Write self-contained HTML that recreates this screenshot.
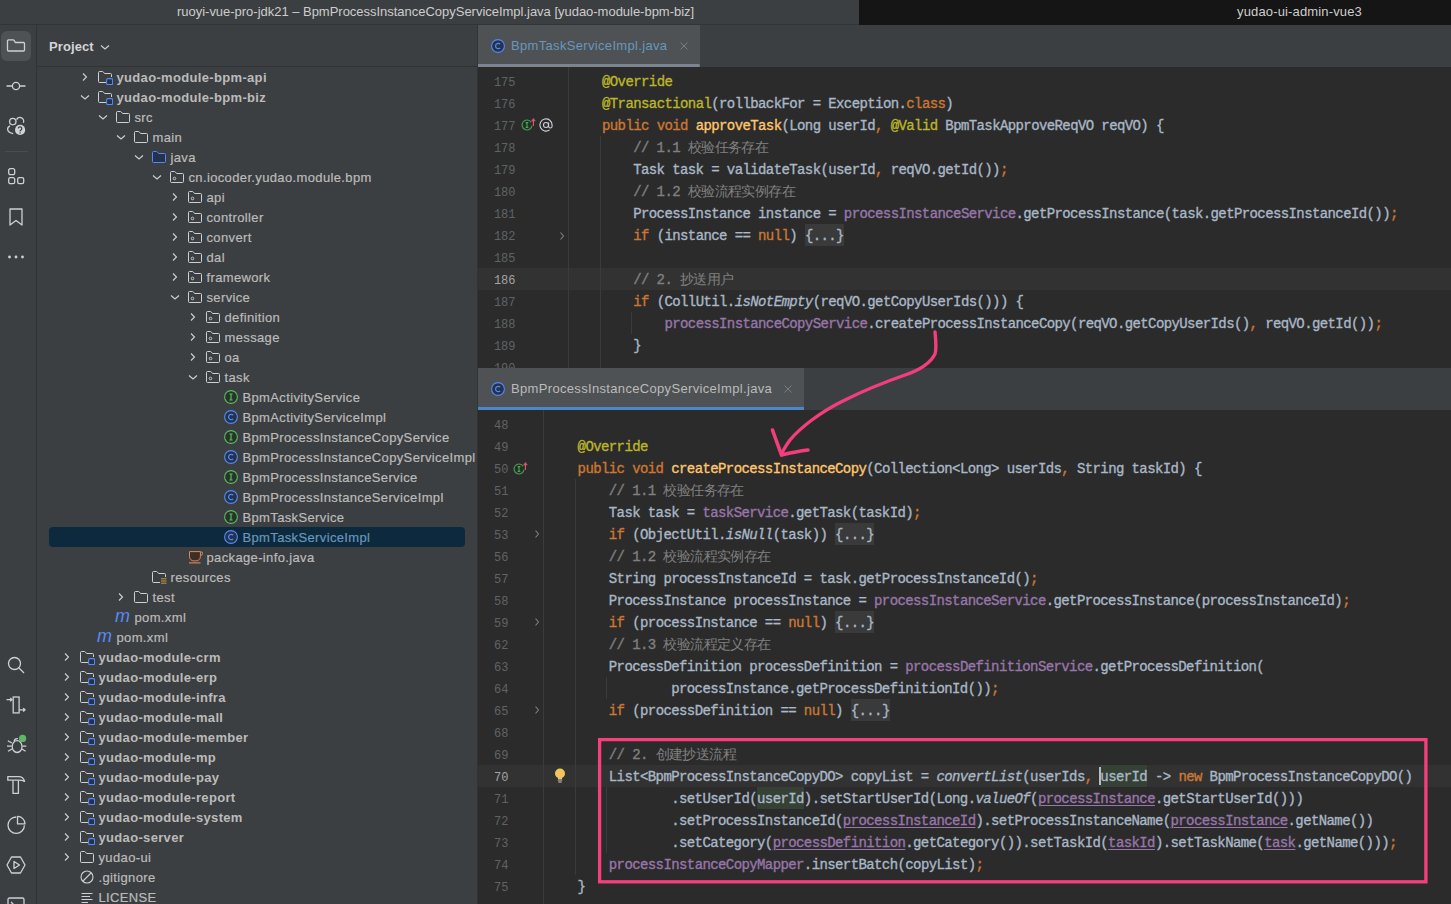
<!DOCTYPE html>
<html><head><meta charset="utf-8"><title>IDE</title><style>
*{margin:0;padding:0;box-sizing:border-box}
html,body{width:1451px;height:904px;overflow:hidden;background:#2b2b2b}
body{position:relative;font-family:"Liberation Sans",sans-serif}
.abs{position:absolute}
.tl{position:absolute;height:20px;line-height:20px;font-size:13px;white-space:pre;color:#bbbbbb;padding-top:1px}
.ln{position:absolute;width:40px;height:22px;line-height:22px;text-align:right;font:12px/22px "Liberation Mono",monospace;white-space:pre;padding-top:1.5px}
.cl{position:absolute;height:22px;font:14px/22px "Liberation Mono",monospace;letter-spacing:-0.6px;white-space:pre;color:#a9b7c6;-webkit-text-stroke:0.35px currentColor}
.cjk{-webkit-text-stroke:0;font-size:13.6px}
.k{color:#cc7832}.a{color:#bbb529}.m{color:#ffc66d}.f{color:#9876aa}.c{color:#808080}.i{font-style:italic}
.u{color:#9876aa;text-decoration:underline;text-decoration-color:#9876aa;text-underline-offset:2px;text-decoration-thickness:1.2px}
.hl{background:#344134}
.fold{color:#a9b7c6}
.guide{position:absolute;width:1px;background:#393b3d}
</style></head>
<body>
<div class="abs" style="left:0;top:0;width:859px;height:25px;background:#3c3f41;border-bottom:1px solid #323436"></div>
<div class="abs" style="left:177px;top:0;height:25px;line-height:24px;font-size:13px;color:#cdcdcd;letter-spacing:-0.02px;white-space:pre">ruoyi-vue-pro-jdk21 – BpmProcessInstanceCopyServiceImpl.java [yudao-module-bpm-biz]</div>
<div class="abs" style="left:859px;top:0;width:592px;height:25px;background:#151515"></div>
<div class="abs" style="left:1237px;top:0;height:25px;line-height:24px;font-size:13px;color:#cdcdcd;letter-spacing:0.15px;white-space:pre">yudao-ui-admin-vue3</div>
<div class="abs" style="left:0;top:25px;width:37px;height:879px;background:#3c3f41;border-right:1px solid #313335"></div>
<div class="abs" style="left:1px;top:31px;width:30px;height:30px;border-radius:6px;background:#4e5254"></div>
<svg style="position:absolute;left:6px;top:37px" width="20" height="18" viewBox="0 0 20 18"><path d="M1.5 4 V13 a1 1 0 0 0 1 1 H17.5 a1 1 0 0 0 1 -1 V6.5 a1 1 0 0 0 -1 -1 H9.5 L8 3.3 a1 1 0 0 0 -0.8 -0.4 H2.5 a1 1 0 0 0 -1 1 Z" fill="none" stroke="#ced0d6" stroke-width="1.3"/></svg>
<svg style="position:absolute;left:6px;top:78px" width="20" height="16" viewBox="0 0 20 16"><path d="M0.5 8 H6 M14 8 H19.5" fill="none" stroke="#ced0d6" stroke-width="1.3"/><circle cx="10" cy="8" r="3.6" fill="none" stroke="#ced0d6" stroke-width="1.3"/></svg>
<svg style="position:absolute;left:2px;top:110px" width="30" height="30" viewBox="0 0 30 30"><circle cx="10.8" cy="11.6" r="3.2" fill="none" stroke="#ced0d6" stroke-width="1.3" stroke-width="1.5"/><path d="M14.6 9.6 A3.6 3.6 0 0 1 21.3 12.8" fill="none" stroke="#ced0d6" stroke-width="1.3" stroke-width="1.5"/><path d="M8 15.8 C4.5 17.5 4.3 22.3 11.2 23.6" fill="none" stroke="#ced0d6" stroke-width="1.3" stroke-width="1.7"/><circle cx="18.1" cy="19.9" r="5.1" fill="#d0d2d6"/><path d="M16.4 18.6 a1.7 1.7 0 1 1 2.6 1.4 c-0.6 0.4 -0.9 0.7 -0.9 1.4" fill="none" stroke="#3c3f41" stroke-width="1.2"/><circle cx="18.1" cy="22.9" r="0.7" fill="#3c3f41"/></svg>
<div class="abs" style="left:5px;top:151px;width:23px;height:1px;background:#4a4d50"></div>
<svg style="position:absolute;left:8px;top:168px" width="17" height="17" viewBox="0 0 17 17"><rect x="0.7" y="0.7" width="6" height="6" rx="1.6" fill="none" stroke="#ced0d6" stroke-width="1.3"/><rect x="0.7" y="9.7" width="6" height="6" rx="1.6" fill="none" stroke="#ced0d6" stroke-width="1.3"/><rect x="9.7" y="9.7" width="6" height="6" rx="1.6" fill="none" stroke="#ced0d6" stroke-width="1.3"/></svg>
<svg style="position:absolute;left:9px;top:208px" width="14" height="19" viewBox="0 0 14 19"><path d="M1 1 H13 V17 L7 12.5 L1 17 Z" fill="none" stroke="#ced0d6" stroke-width="1.3" stroke-linejoin="round"/></svg>
<svg style="position:absolute;left:7px;top:254px" width="18" height="6" viewBox="0 0 18 6"><circle cx="2.5" cy="3" r="1.4" fill="#ced0d6"/><circle cx="9" cy="3" r="1.4" fill="#ced0d6"/><circle cx="15.5" cy="3" r="1.4" fill="#ced0d6"/></svg>
<svg style="position:absolute;left:7px;top:656px" width="18" height="18" viewBox="0 0 18 18"><circle cx="7.5" cy="7.5" r="6" fill="none" stroke="#ced0d6" stroke-width="1.3"/><path d="M12 12 L17 17" fill="none" stroke="#ced0d6" stroke-width="1.3"/></svg>
<svg style="position:absolute;left:2px;top:690px" width="30" height="30" viewBox="0 0 30 30"><rect x="11.2" y="7" width="5.9" height="15.9" fill="none" stroke="#ced0d6" stroke-width="1.3"/><path d="M4.5 9.7 H10 M8.2 8 L10 9.7 L8.2 11.4 M17.2 19.8 H23 M21.2 18.1 L23 19.8 L21.2 21.5" fill="none" stroke="#ced0d6" stroke-width="1.3"/></svg>
<svg style="position:absolute;left:2px;top:725px" width="30" height="30" viewBox="0 0 30 30"><ellipse cx="15.1" cy="21.6" rx="4.9" ry="5.9" fill="none" stroke="#ced0d6" stroke-width="1.3"/><path d="M12.2 16.3 C12.2 14.4 13.9 13.3 16 13.6 M5.8 15.8 L9.9 18 M5 21.2 H9.7 M6 26.2 L10 24 M24.3 21.2 H20.4 M23.6 26.2 L19.9 24" fill="none" stroke="#ced0d6" stroke-width="1.3"/><circle cx="20.6" cy="13.4" r="3.6" fill="#5fb865"/></svg>
<svg style="position:absolute;left:2px;top:770px" width="30" height="30" viewBox="0 0 30 30"><path d="M5.8 6.6 H16.5 C19.5 6.6 21.8 8.4 22.6 11.3 C20.6 10.4 18.3 10.2 16.5 10.2 H5.8 Z" fill="none" stroke="#ced0d6" stroke-width="1.3" stroke-linejoin="round"/><path d="M11 10.4 V23.4 H16.4 V10.4" fill="none" stroke="#ced0d6" stroke-width="1.3" stroke-linejoin="round"/></svg>
<svg style="position:absolute;left:2px;top:810px" width="30" height="30" viewBox="0 0 30 30"><path d="M14.2 7 A8.2 8.2 0 1 0 22.4 15.2" fill="none" stroke="#ced0d6" stroke-width="1.3"/><path d="M15.5 6.4 V13.9 H23 A7.5 7.5 0 0 0 15.5 6.4 Z" fill="none" stroke="#ced0d6" stroke-width="1.3" stroke-linejoin="round"/></svg>
<svg style="position:absolute;left:6px;top:855px" width="20" height="20" viewBox="0 0 20 20"><path d="M5.5 2 H14.5 L19 10 L14.5 18 H5.5 L1 10 Z" fill="none" stroke="#ced0d6" stroke-width="1.3" stroke-linejoin="round"/><path d="M8 6.5 L13.5 10 L8 13.5 Z" fill="none" stroke="#ced0d6" stroke-width="1.3" stroke-linejoin="round"/></svg>
<svg style="position:absolute;left:7px;top:897px" width="18" height="16" viewBox="0 0 18 16"><rect x="1" y="1" width="16" height="14" rx="1.5" fill="none" stroke="#ced0d6" stroke-width="1.3"/><path d="M4 5 L7 8 L4 11" fill="none" stroke="#ced0d6" stroke-width="1.3"/></svg>
<div class="abs" style="left:37px;top:25px;width:441px;height:879px;background:#3c3f41;border-right:1px solid #313335"></div>
<div class="abs" style="left:37px;top:66px;width:440px;height:1px;background:#313335"></div>
<div class="abs" style="left:49px;top:37px;height:20px;line-height:20px;font-size:13px;font-weight:bold;color:#d2d4d8;letter-spacing:0.1px">Project</div>
<svg style="position:absolute;left:97px;top:38.8px" width="16" height="16" viewBox="0 0 16 16"><path d="M4 6.5 L8 10 L12 6.5" fill="none" stroke="#ced0d6" stroke-width="1.1"/></svg>
<div style="position:absolute;left:49px;top:527px;width:416px;height:20px;border-radius:4px;background:#0d293e"></div>
<svg style="position:absolute;left:76.5px;top:69px" width="16" height="16" viewBox="0 0 16 16"><path d="M6 4.5 L9.5 8 L6 11.5" fill="none" stroke="#ced0d6" stroke-width="1.1"/></svg>
<svg style="position:absolute;left:97px;top:69px" width="16" height="16" viewBox="0 0 16 16"><path d="M9 13.5 H2.5 a1 1 0 0 1 -1 -1 V3.5 a1 1 0 0 1 1 -1 H5.5 a1 1 0 0 1 0.7 0.3 L7.6 4.5 H13.5 a1 1 0 0 1 1 1 V8" fill="none" stroke="#ced0d6" stroke-width="1"/><rect x="9.6" y="9.6" width="6" height="6" rx="1.4" fill="#25324d" stroke="#548af7" stroke-width="1.1"/></svg>
<div class="tl" style="left:116.5px;top:67px;color:#bbbbbb;font-weight:bold;letter-spacing:0.33px">yudao-module-bpm-api</div>
<svg style="position:absolute;left:76.5px;top:89px" width="16" height="16" viewBox="0 0 16 16"><path d="M4 6.5 L8 10 L12 6.5" fill="none" stroke="#ced0d6" stroke-width="1.1"/></svg>
<svg style="position:absolute;left:97px;top:89px" width="16" height="16" viewBox="0 0 16 16"><path d="M9 13.5 H2.5 a1 1 0 0 1 -1 -1 V3.5 a1 1 0 0 1 1 -1 H5.5 a1 1 0 0 1 0.7 0.3 L7.6 4.5 H13.5 a1 1 0 0 1 1 1 V8" fill="none" stroke="#ced0d6" stroke-width="1"/><rect x="9.6" y="9.6" width="6" height="6" rx="1.4" fill="#25324d" stroke="#548af7" stroke-width="1.1"/></svg>
<div class="tl" style="left:116.5px;top:87px;color:#bbbbbb;font-weight:bold;letter-spacing:0.33px">yudao-module-bpm-biz</div>
<svg style="position:absolute;left:94.5px;top:109px" width="16" height="16" viewBox="0 0 16 16"><path d="M4 6.5 L8 10 L12 6.5" fill="none" stroke="#ced0d6" stroke-width="1.1"/></svg>
<svg style="position:absolute;left:115px;top:109px" width="16" height="16" viewBox="0 0 16 16"><path d="M1.5 4 V12.5 a1 1 0 0 0 1 1 H13.5 a1 1 0 0 0 1 -1 V5.5 a1 1 0 0 0 -1 -1 H7.6 L6.2 2.8 a1 1 0 0 0 -0.7 -0.3 H2.5 a1 1 0 0 0 -1 1 Z" fill="none" stroke="#ced0d6" stroke-width="1"/></svg>
<div class="tl" style="left:134.5px;top:107px;color:#bbbbbb;font-weight:normal;letter-spacing:0.36px;-webkit-text-stroke:0.2px currentColor">src</div>
<svg style="position:absolute;left:112.5px;top:129px" width="16" height="16" viewBox="0 0 16 16"><path d="M4 6.5 L8 10 L12 6.5" fill="none" stroke="#ced0d6" stroke-width="1.1"/></svg>
<svg style="position:absolute;left:133px;top:129px" width="16" height="16" viewBox="0 0 16 16"><path d="M1.5 4 V12.5 a1 1 0 0 0 1 1 H13.5 a1 1 0 0 0 1 -1 V5.5 a1 1 0 0 0 -1 -1 H7.6 L6.2 2.8 a1 1 0 0 0 -0.7 -0.3 H2.5 a1 1 0 0 0 -1 1 Z" fill="none" stroke="#ced0d6" stroke-width="1"/></svg>
<div class="tl" style="left:152.5px;top:127px;color:#bbbbbb;font-weight:normal;letter-spacing:0.36px;-webkit-text-stroke:0.2px currentColor">main</div>
<svg style="position:absolute;left:130.5px;top:149px" width="16" height="16" viewBox="0 0 16 16"><path d="M4 6.5 L8 10 L12 6.5" fill="none" stroke="#ced0d6" stroke-width="1.1"/></svg>
<svg style="position:absolute;left:151px;top:149px" width="16" height="16" viewBox="0 0 16 16"><path d="M1.5 4 V12.5 a1 1 0 0 0 1 1 H13.5 a1 1 0 0 0 1 -1 V5.5 a1 1 0 0 0 -1 -1 H7.6 L6.2 2.8 a1 1 0 0 0 -0.7 -0.3 H2.5 a1 1 0 0 0 -1 1 Z" fill="#25324d" stroke="#548af7" stroke-width="1"/></svg>
<div class="tl" style="left:170.5px;top:147px;color:#bbbbbb;font-weight:normal;letter-spacing:0.36px;-webkit-text-stroke:0.2px currentColor">java</div>
<svg style="position:absolute;left:148.5px;top:169px" width="16" height="16" viewBox="0 0 16 16"><path d="M4 6.5 L8 10 L12 6.5" fill="none" stroke="#ced0d6" stroke-width="1.1"/></svg>
<svg style="position:absolute;left:169px;top:169px" width="16" height="16" viewBox="0 0 16 16"><path d="M1.5 4 V12.5 a1 1 0 0 0 1 1 H13.5 a1 1 0 0 0 1 -1 V5.5 a1 1 0 0 0 -1 -1 H7.6 L6.2 2.8 a1 1 0 0 0 -0.7 -0.3 H2.5 a1 1 0 0 0 -1 1 Z" fill="none" stroke="#ced0d6" stroke-width="1"/><circle cx="5.5" cy="9.5" r="1.3" fill="none" stroke="#ced0d6" stroke-width="0.9"/></svg>
<div class="tl" style="left:188.5px;top:167px;color:#bbbbbb;font-weight:normal;letter-spacing:0.36px;-webkit-text-stroke:0.2px currentColor">cn.iocoder.yudao.module.bpm</div>
<svg style="position:absolute;left:166.5px;top:189px" width="16" height="16" viewBox="0 0 16 16"><path d="M6 4.5 L9.5 8 L6 11.5" fill="none" stroke="#ced0d6" stroke-width="1.1"/></svg>
<svg style="position:absolute;left:187px;top:189px" width="16" height="16" viewBox="0 0 16 16"><path d="M1.5 4 V12.5 a1 1 0 0 0 1 1 H13.5 a1 1 0 0 0 1 -1 V5.5 a1 1 0 0 0 -1 -1 H7.6 L6.2 2.8 a1 1 0 0 0 -0.7 -0.3 H2.5 a1 1 0 0 0 -1 1 Z" fill="none" stroke="#ced0d6" stroke-width="1"/><circle cx="5.5" cy="9.5" r="1.3" fill="none" stroke="#ced0d6" stroke-width="0.9"/></svg>
<div class="tl" style="left:206.5px;top:187px;color:#bbbbbb;font-weight:normal;letter-spacing:0.36px;-webkit-text-stroke:0.2px currentColor">api</div>
<svg style="position:absolute;left:166.5px;top:209px" width="16" height="16" viewBox="0 0 16 16"><path d="M6 4.5 L9.5 8 L6 11.5" fill="none" stroke="#ced0d6" stroke-width="1.1"/></svg>
<svg style="position:absolute;left:187px;top:209px" width="16" height="16" viewBox="0 0 16 16"><path d="M1.5 4 V12.5 a1 1 0 0 0 1 1 H13.5 a1 1 0 0 0 1 -1 V5.5 a1 1 0 0 0 -1 -1 H7.6 L6.2 2.8 a1 1 0 0 0 -0.7 -0.3 H2.5 a1 1 0 0 0 -1 1 Z" fill="none" stroke="#ced0d6" stroke-width="1"/><circle cx="5.5" cy="9.5" r="1.3" fill="none" stroke="#ced0d6" stroke-width="0.9"/></svg>
<div class="tl" style="left:206.5px;top:207px;color:#bbbbbb;font-weight:normal;letter-spacing:0.36px;-webkit-text-stroke:0.2px currentColor">controller</div>
<svg style="position:absolute;left:166.5px;top:229px" width="16" height="16" viewBox="0 0 16 16"><path d="M6 4.5 L9.5 8 L6 11.5" fill="none" stroke="#ced0d6" stroke-width="1.1"/></svg>
<svg style="position:absolute;left:187px;top:229px" width="16" height="16" viewBox="0 0 16 16"><path d="M1.5 4 V12.5 a1 1 0 0 0 1 1 H13.5 a1 1 0 0 0 1 -1 V5.5 a1 1 0 0 0 -1 -1 H7.6 L6.2 2.8 a1 1 0 0 0 -0.7 -0.3 H2.5 a1 1 0 0 0 -1 1 Z" fill="none" stroke="#ced0d6" stroke-width="1"/><circle cx="5.5" cy="9.5" r="1.3" fill="none" stroke="#ced0d6" stroke-width="0.9"/></svg>
<div class="tl" style="left:206.5px;top:227px;color:#bbbbbb;font-weight:normal;letter-spacing:0.36px;-webkit-text-stroke:0.2px currentColor">convert</div>
<svg style="position:absolute;left:166.5px;top:249px" width="16" height="16" viewBox="0 0 16 16"><path d="M6 4.5 L9.5 8 L6 11.5" fill="none" stroke="#ced0d6" stroke-width="1.1"/></svg>
<svg style="position:absolute;left:187px;top:249px" width="16" height="16" viewBox="0 0 16 16"><path d="M1.5 4 V12.5 a1 1 0 0 0 1 1 H13.5 a1 1 0 0 0 1 -1 V5.5 a1 1 0 0 0 -1 -1 H7.6 L6.2 2.8 a1 1 0 0 0 -0.7 -0.3 H2.5 a1 1 0 0 0 -1 1 Z" fill="none" stroke="#ced0d6" stroke-width="1"/><circle cx="5.5" cy="9.5" r="1.3" fill="none" stroke="#ced0d6" stroke-width="0.9"/></svg>
<div class="tl" style="left:206.5px;top:247px;color:#bbbbbb;font-weight:normal;letter-spacing:0.36px;-webkit-text-stroke:0.2px currentColor">dal</div>
<svg style="position:absolute;left:166.5px;top:269px" width="16" height="16" viewBox="0 0 16 16"><path d="M6 4.5 L9.5 8 L6 11.5" fill="none" stroke="#ced0d6" stroke-width="1.1"/></svg>
<svg style="position:absolute;left:187px;top:269px" width="16" height="16" viewBox="0 0 16 16"><path d="M1.5 4 V12.5 a1 1 0 0 0 1 1 H13.5 a1 1 0 0 0 1 -1 V5.5 a1 1 0 0 0 -1 -1 H7.6 L6.2 2.8 a1 1 0 0 0 -0.7 -0.3 H2.5 a1 1 0 0 0 -1 1 Z" fill="none" stroke="#ced0d6" stroke-width="1"/><circle cx="5.5" cy="9.5" r="1.3" fill="none" stroke="#ced0d6" stroke-width="0.9"/></svg>
<div class="tl" style="left:206.5px;top:267px;color:#bbbbbb;font-weight:normal;letter-spacing:0.36px;-webkit-text-stroke:0.2px currentColor">framework</div>
<svg style="position:absolute;left:166.5px;top:289px" width="16" height="16" viewBox="0 0 16 16"><path d="M4 6.5 L8 10 L12 6.5" fill="none" stroke="#ced0d6" stroke-width="1.1"/></svg>
<svg style="position:absolute;left:187px;top:289px" width="16" height="16" viewBox="0 0 16 16"><path d="M1.5 4 V12.5 a1 1 0 0 0 1 1 H13.5 a1 1 0 0 0 1 -1 V5.5 a1 1 0 0 0 -1 -1 H7.6 L6.2 2.8 a1 1 0 0 0 -0.7 -0.3 H2.5 a1 1 0 0 0 -1 1 Z" fill="none" stroke="#ced0d6" stroke-width="1"/><circle cx="5.5" cy="9.5" r="1.3" fill="none" stroke="#ced0d6" stroke-width="0.9"/></svg>
<div class="tl" style="left:206.5px;top:287px;color:#bbbbbb;font-weight:normal;letter-spacing:0.36px;-webkit-text-stroke:0.2px currentColor">service</div>
<svg style="position:absolute;left:184.5px;top:309px" width="16" height="16" viewBox="0 0 16 16"><path d="M6 4.5 L9.5 8 L6 11.5" fill="none" stroke="#ced0d6" stroke-width="1.1"/></svg>
<svg style="position:absolute;left:205px;top:309px" width="16" height="16" viewBox="0 0 16 16"><path d="M1.5 4 V12.5 a1 1 0 0 0 1 1 H13.5 a1 1 0 0 0 1 -1 V5.5 a1 1 0 0 0 -1 -1 H7.6 L6.2 2.8 a1 1 0 0 0 -0.7 -0.3 H2.5 a1 1 0 0 0 -1 1 Z" fill="none" stroke="#ced0d6" stroke-width="1"/><circle cx="5.5" cy="9.5" r="1.3" fill="none" stroke="#ced0d6" stroke-width="0.9"/></svg>
<div class="tl" style="left:224.5px;top:307px;color:#bbbbbb;font-weight:normal;letter-spacing:0.36px;-webkit-text-stroke:0.2px currentColor">definition</div>
<svg style="position:absolute;left:184.5px;top:329px" width="16" height="16" viewBox="0 0 16 16"><path d="M6 4.5 L9.5 8 L6 11.5" fill="none" stroke="#ced0d6" stroke-width="1.1"/></svg>
<svg style="position:absolute;left:205px;top:329px" width="16" height="16" viewBox="0 0 16 16"><path d="M1.5 4 V12.5 a1 1 0 0 0 1 1 H13.5 a1 1 0 0 0 1 -1 V5.5 a1 1 0 0 0 -1 -1 H7.6 L6.2 2.8 a1 1 0 0 0 -0.7 -0.3 H2.5 a1 1 0 0 0 -1 1 Z" fill="none" stroke="#ced0d6" stroke-width="1"/><circle cx="5.5" cy="9.5" r="1.3" fill="none" stroke="#ced0d6" stroke-width="0.9"/></svg>
<div class="tl" style="left:224.5px;top:327px;color:#bbbbbb;font-weight:normal;letter-spacing:0.36px;-webkit-text-stroke:0.2px currentColor">message</div>
<svg style="position:absolute;left:184.5px;top:349px" width="16" height="16" viewBox="0 0 16 16"><path d="M6 4.5 L9.5 8 L6 11.5" fill="none" stroke="#ced0d6" stroke-width="1.1"/></svg>
<svg style="position:absolute;left:205px;top:349px" width="16" height="16" viewBox="0 0 16 16"><path d="M1.5 4 V12.5 a1 1 0 0 0 1 1 H13.5 a1 1 0 0 0 1 -1 V5.5 a1 1 0 0 0 -1 -1 H7.6 L6.2 2.8 a1 1 0 0 0 -0.7 -0.3 H2.5 a1 1 0 0 0 -1 1 Z" fill="none" stroke="#ced0d6" stroke-width="1"/><circle cx="5.5" cy="9.5" r="1.3" fill="none" stroke="#ced0d6" stroke-width="0.9"/></svg>
<div class="tl" style="left:224.5px;top:347px;color:#bbbbbb;font-weight:normal;letter-spacing:0.36px;-webkit-text-stroke:0.2px currentColor">oa</div>
<svg style="position:absolute;left:184.5px;top:369px" width="16" height="16" viewBox="0 0 16 16"><path d="M4 6.5 L8 10 L12 6.5" fill="none" stroke="#ced0d6" stroke-width="1.1"/></svg>
<svg style="position:absolute;left:205px;top:369px" width="16" height="16" viewBox="0 0 16 16"><path d="M1.5 4 V12.5 a1 1 0 0 0 1 1 H13.5 a1 1 0 0 0 1 -1 V5.5 a1 1 0 0 0 -1 -1 H7.6 L6.2 2.8 a1 1 0 0 0 -0.7 -0.3 H2.5 a1 1 0 0 0 -1 1 Z" fill="none" stroke="#ced0d6" stroke-width="1"/><circle cx="5.5" cy="9.5" r="1.3" fill="none" stroke="#ced0d6" stroke-width="0.9"/></svg>
<div class="tl" style="left:224.5px;top:367px;color:#bbbbbb;font-weight:normal;letter-spacing:0.36px;-webkit-text-stroke:0.2px currentColor">task</div>
<svg style="position:absolute;left:223px;top:389px" width="16" height="16" viewBox="0 0 16 16"><circle cx="8" cy="8" r="6.4" fill="#253627" stroke="#5fb865" stroke-width="1.1"/><path d="M6.4 5 H9.6 M8 5 V11 M6.4 11 H9.6" stroke="#5fb865" stroke-width="1.2"/></svg>
<div class="tl" style="left:242.5px;top:387px;color:#bbbbbb;font-weight:normal;letter-spacing:0.36px;-webkit-text-stroke:0.2px currentColor">BpmActivityService</div>
<svg style="position:absolute;left:223px;top:409px" width="16" height="16" viewBox="0 0 16 16"><circle cx="8" cy="8" r="6.4" fill="#25324d" stroke="#548af7" stroke-width="1.1"/><path d="M10.2 6.1 A2.7 2.7 0 1 0 10.2 9.9" fill="none" stroke="#548af7" stroke-width="1.2"/></svg>
<div class="tl" style="left:242.5px;top:407px;color:#bbbbbb;font-weight:normal;letter-spacing:0.36px;-webkit-text-stroke:0.2px currentColor">BpmActivityServiceImpl</div>
<svg style="position:absolute;left:223px;top:429px" width="16" height="16" viewBox="0 0 16 16"><circle cx="8" cy="8" r="6.4" fill="#253627" stroke="#5fb865" stroke-width="1.1"/><path d="M6.4 5 H9.6 M8 5 V11 M6.4 11 H9.6" stroke="#5fb865" stroke-width="1.2"/></svg>
<div class="tl" style="left:242.5px;top:427px;color:#bbbbbb;font-weight:normal;letter-spacing:0.36px;-webkit-text-stroke:0.2px currentColor">BpmProcessInstanceCopyService</div>
<svg style="position:absolute;left:223px;top:449px" width="16" height="16" viewBox="0 0 16 16"><circle cx="8" cy="8" r="6.4" fill="#25324d" stroke="#548af7" stroke-width="1.1"/><path d="M10.2 6.1 A2.7 2.7 0 1 0 10.2 9.9" fill="none" stroke="#548af7" stroke-width="1.2"/></svg>
<div class="tl" style="left:242.5px;top:447px;color:#bbbbbb;font-weight:normal;letter-spacing:0.36px;-webkit-text-stroke:0.2px currentColor">BpmProcessInstanceCopyServiceImpl</div>
<svg style="position:absolute;left:223px;top:469px" width="16" height="16" viewBox="0 0 16 16"><circle cx="8" cy="8" r="6.4" fill="#253627" stroke="#5fb865" stroke-width="1.1"/><path d="M6.4 5 H9.6 M8 5 V11 M6.4 11 H9.6" stroke="#5fb865" stroke-width="1.2"/></svg>
<div class="tl" style="left:242.5px;top:467px;color:#bbbbbb;font-weight:normal;letter-spacing:0.36px;-webkit-text-stroke:0.2px currentColor">BpmProcessInstanceService</div>
<svg style="position:absolute;left:223px;top:489px" width="16" height="16" viewBox="0 0 16 16"><circle cx="8" cy="8" r="6.4" fill="#25324d" stroke="#548af7" stroke-width="1.1"/><path d="M10.2 6.1 A2.7 2.7 0 1 0 10.2 9.9" fill="none" stroke="#548af7" stroke-width="1.2"/></svg>
<div class="tl" style="left:242.5px;top:487px;color:#bbbbbb;font-weight:normal;letter-spacing:0.36px;-webkit-text-stroke:0.2px currentColor">BpmProcessInstanceServiceImpl</div>
<svg style="position:absolute;left:223px;top:509px" width="16" height="16" viewBox="0 0 16 16"><circle cx="8" cy="8" r="6.4" fill="#253627" stroke="#5fb865" stroke-width="1.1"/><path d="M6.4 5 H9.6 M8 5 V11 M6.4 11 H9.6" stroke="#5fb865" stroke-width="1.2"/></svg>
<div class="tl" style="left:242.5px;top:507px;color:#bbbbbb;font-weight:normal;letter-spacing:0.36px;-webkit-text-stroke:0.2px currentColor">BpmTaskService</div>
<svg style="position:absolute;left:223px;top:529px" width="16" height="16" viewBox="0 0 16 16"><circle cx="8" cy="8" r="6.4" fill="#25324d" stroke="#548af7" stroke-width="1.1"/><path d="M10.2 6.1 A2.7 2.7 0 1 0 10.2 9.9" fill="none" stroke="#548af7" stroke-width="1.2"/></svg>
<div class="tl" style="left:242.5px;top:527px;color:#6897bb;font-weight:normal;letter-spacing:0.36px;-webkit-text-stroke:0.2px currentColor">BpmTaskServiceImpl</div>
<svg style="position:absolute;left:187px;top:549px" width="16" height="16" viewBox="0 0 16 16"><path d="M2.5 2.6 H13.4 V7.6 a4.3 4.3 0 0 1 -4.3 4.3 H6.8 a4.3 4.3 0 0 1 -4.3 -4.3 Z" fill="#3d2e26" stroke="#e08855" stroke-width="1"/><path d="M13.4 3 H14.8 a0.7 0.7 0 0 1 0.7 0.7 V4.6 a1.6 1.6 0 0 1 -1.6 1.6 H13.4" fill="none" stroke="#e08855" stroke-width="1"/><path d="M2 13.9 H13.6" stroke="#e08855" stroke-width="1.1"/></svg>
<div class="tl" style="left:206.5px;top:547px;color:#bbbbbb;font-weight:normal;letter-spacing:0.36px;-webkit-text-stroke:0.2px currentColor">package-info.java</div>
<svg style="position:absolute;left:151px;top:569px" width="16" height="16" viewBox="0 0 16 16"><path d="M9 13.5 H2.5 a1 1 0 0 1 -1 -1 V3.5 a1 1 0 0 1 1 -1 H5.5 a1 1 0 0 1 0.7 0.3 L7.6 4.5 H13.5 a1 1 0 0 1 1 1 V8" fill="none" stroke="#ced0d6" stroke-width="1"/><path d="M10 9.8 H15.5 M10 12 H15.5 M10 14.2 H15.5" stroke="#d9a343" stroke-width="0.9"/></svg>
<div class="tl" style="left:170.5px;top:567px;color:#bbbbbb;font-weight:normal;letter-spacing:0.36px;-webkit-text-stroke:0.2px currentColor">resources</div>
<svg style="position:absolute;left:112.5px;top:589px" width="16" height="16" viewBox="0 0 16 16"><path d="M6 4.5 L9.5 8 L6 11.5" fill="none" stroke="#ced0d6" stroke-width="1.1"/></svg>
<svg style="position:absolute;left:133px;top:589px" width="16" height="16" viewBox="0 0 16 16"><path d="M1.5 4 V12.5 a1 1 0 0 0 1 1 H13.5 a1 1 0 0 0 1 -1 V5.5 a1 1 0 0 0 -1 -1 H7.6 L6.2 2.8 a1 1 0 0 0 -0.7 -0.3 H2.5 a1 1 0 0 0 -1 1 Z" fill="none" stroke="#ced0d6" stroke-width="1"/></svg>
<div class="tl" style="left:152.5px;top:587px;color:#bbbbbb;font-weight:normal;letter-spacing:0.36px;-webkit-text-stroke:0.2px currentColor">test</div>
<div style="position:absolute;left:115px;top:606px;font:italic 18px/20px 'Liberation Sans',sans-serif;color:#548af7;letter-spacing:-1px">m</div>
<div class="tl" style="left:134.5px;top:607px;color:#bbbbbb;font-weight:normal;letter-spacing:0.36px;-webkit-text-stroke:0.2px currentColor">pom.xml</div>
<div style="position:absolute;left:97px;top:626px;font:italic 18px/20px 'Liberation Sans',sans-serif;color:#548af7;letter-spacing:-1px">m</div>
<div class="tl" style="left:116.5px;top:627px;color:#bbbbbb;font-weight:normal;letter-spacing:0.36px;-webkit-text-stroke:0.2px currentColor">pom.xml</div>
<svg style="position:absolute;left:58.5px;top:649px" width="16" height="16" viewBox="0 0 16 16"><path d="M6 4.5 L9.5 8 L6 11.5" fill="none" stroke="#ced0d6" stroke-width="1.1"/></svg>
<svg style="position:absolute;left:79px;top:649px" width="16" height="16" viewBox="0 0 16 16"><path d="M9 13.5 H2.5 a1 1 0 0 1 -1 -1 V3.5 a1 1 0 0 1 1 -1 H5.5 a1 1 0 0 1 0.7 0.3 L7.6 4.5 H13.5 a1 1 0 0 1 1 1 V8" fill="none" stroke="#ced0d6" stroke-width="1"/><rect x="9.6" y="9.6" width="6" height="6" rx="1.4" fill="#25324d" stroke="#548af7" stroke-width="1.1"/></svg>
<div class="tl" style="left:98.5px;top:647px;color:#bbbbbb;font-weight:bold;letter-spacing:0.33px">yudao-module-crm</div>
<svg style="position:absolute;left:58.5px;top:669px" width="16" height="16" viewBox="0 0 16 16"><path d="M6 4.5 L9.5 8 L6 11.5" fill="none" stroke="#ced0d6" stroke-width="1.1"/></svg>
<svg style="position:absolute;left:79px;top:669px" width="16" height="16" viewBox="0 0 16 16"><path d="M9 13.5 H2.5 a1 1 0 0 1 -1 -1 V3.5 a1 1 0 0 1 1 -1 H5.5 a1 1 0 0 1 0.7 0.3 L7.6 4.5 H13.5 a1 1 0 0 1 1 1 V8" fill="none" stroke="#ced0d6" stroke-width="1"/><rect x="9.6" y="9.6" width="6" height="6" rx="1.4" fill="#25324d" stroke="#548af7" stroke-width="1.1"/></svg>
<div class="tl" style="left:98.5px;top:667px;color:#bbbbbb;font-weight:bold;letter-spacing:0.33px">yudao-module-erp</div>
<svg style="position:absolute;left:58.5px;top:689px" width="16" height="16" viewBox="0 0 16 16"><path d="M6 4.5 L9.5 8 L6 11.5" fill="none" stroke="#ced0d6" stroke-width="1.1"/></svg>
<svg style="position:absolute;left:79px;top:689px" width="16" height="16" viewBox="0 0 16 16"><path d="M9 13.5 H2.5 a1 1 0 0 1 -1 -1 V3.5 a1 1 0 0 1 1 -1 H5.5 a1 1 0 0 1 0.7 0.3 L7.6 4.5 H13.5 a1 1 0 0 1 1 1 V8" fill="none" stroke="#ced0d6" stroke-width="1"/><rect x="9.6" y="9.6" width="6" height="6" rx="1.4" fill="#25324d" stroke="#548af7" stroke-width="1.1"/></svg>
<div class="tl" style="left:98.5px;top:687px;color:#bbbbbb;font-weight:bold;letter-spacing:0.33px">yudao-module-infra</div>
<svg style="position:absolute;left:58.5px;top:709px" width="16" height="16" viewBox="0 0 16 16"><path d="M6 4.5 L9.5 8 L6 11.5" fill="none" stroke="#ced0d6" stroke-width="1.1"/></svg>
<svg style="position:absolute;left:79px;top:709px" width="16" height="16" viewBox="0 0 16 16"><path d="M9 13.5 H2.5 a1 1 0 0 1 -1 -1 V3.5 a1 1 0 0 1 1 -1 H5.5 a1 1 0 0 1 0.7 0.3 L7.6 4.5 H13.5 a1 1 0 0 1 1 1 V8" fill="none" stroke="#ced0d6" stroke-width="1"/><rect x="9.6" y="9.6" width="6" height="6" rx="1.4" fill="#25324d" stroke="#548af7" stroke-width="1.1"/></svg>
<div class="tl" style="left:98.5px;top:707px;color:#bbbbbb;font-weight:bold;letter-spacing:0.33px">yudao-module-mall</div>
<svg style="position:absolute;left:58.5px;top:729px" width="16" height="16" viewBox="0 0 16 16"><path d="M6 4.5 L9.5 8 L6 11.5" fill="none" stroke="#ced0d6" stroke-width="1.1"/></svg>
<svg style="position:absolute;left:79px;top:729px" width="16" height="16" viewBox="0 0 16 16"><path d="M9 13.5 H2.5 a1 1 0 0 1 -1 -1 V3.5 a1 1 0 0 1 1 -1 H5.5 a1 1 0 0 1 0.7 0.3 L7.6 4.5 H13.5 a1 1 0 0 1 1 1 V8" fill="none" stroke="#ced0d6" stroke-width="1"/><rect x="9.6" y="9.6" width="6" height="6" rx="1.4" fill="#25324d" stroke="#548af7" stroke-width="1.1"/></svg>
<div class="tl" style="left:98.5px;top:727px;color:#bbbbbb;font-weight:bold;letter-spacing:0.33px">yudao-module-member</div>
<svg style="position:absolute;left:58.5px;top:749px" width="16" height="16" viewBox="0 0 16 16"><path d="M6 4.5 L9.5 8 L6 11.5" fill="none" stroke="#ced0d6" stroke-width="1.1"/></svg>
<svg style="position:absolute;left:79px;top:749px" width="16" height="16" viewBox="0 0 16 16"><path d="M9 13.5 H2.5 a1 1 0 0 1 -1 -1 V3.5 a1 1 0 0 1 1 -1 H5.5 a1 1 0 0 1 0.7 0.3 L7.6 4.5 H13.5 a1 1 0 0 1 1 1 V8" fill="none" stroke="#ced0d6" stroke-width="1"/><rect x="9.6" y="9.6" width="6" height="6" rx="1.4" fill="#25324d" stroke="#548af7" stroke-width="1.1"/></svg>
<div class="tl" style="left:98.5px;top:747px;color:#bbbbbb;font-weight:bold;letter-spacing:0.33px">yudao-module-mp</div>
<svg style="position:absolute;left:58.5px;top:769px" width="16" height="16" viewBox="0 0 16 16"><path d="M6 4.5 L9.5 8 L6 11.5" fill="none" stroke="#ced0d6" stroke-width="1.1"/></svg>
<svg style="position:absolute;left:79px;top:769px" width="16" height="16" viewBox="0 0 16 16"><path d="M9 13.5 H2.5 a1 1 0 0 1 -1 -1 V3.5 a1 1 0 0 1 1 -1 H5.5 a1 1 0 0 1 0.7 0.3 L7.6 4.5 H13.5 a1 1 0 0 1 1 1 V8" fill="none" stroke="#ced0d6" stroke-width="1"/><rect x="9.6" y="9.6" width="6" height="6" rx="1.4" fill="#25324d" stroke="#548af7" stroke-width="1.1"/></svg>
<div class="tl" style="left:98.5px;top:767px;color:#bbbbbb;font-weight:bold;letter-spacing:0.33px">yudao-module-pay</div>
<svg style="position:absolute;left:58.5px;top:789px" width="16" height="16" viewBox="0 0 16 16"><path d="M6 4.5 L9.5 8 L6 11.5" fill="none" stroke="#ced0d6" stroke-width="1.1"/></svg>
<svg style="position:absolute;left:79px;top:789px" width="16" height="16" viewBox="0 0 16 16"><path d="M9 13.5 H2.5 a1 1 0 0 1 -1 -1 V3.5 a1 1 0 0 1 1 -1 H5.5 a1 1 0 0 1 0.7 0.3 L7.6 4.5 H13.5 a1 1 0 0 1 1 1 V8" fill="none" stroke="#ced0d6" stroke-width="1"/><rect x="9.6" y="9.6" width="6" height="6" rx="1.4" fill="#25324d" stroke="#548af7" stroke-width="1.1"/></svg>
<div class="tl" style="left:98.5px;top:787px;color:#bbbbbb;font-weight:bold;letter-spacing:0.33px">yudao-module-report</div>
<svg style="position:absolute;left:58.5px;top:809px" width="16" height="16" viewBox="0 0 16 16"><path d="M6 4.5 L9.5 8 L6 11.5" fill="none" stroke="#ced0d6" stroke-width="1.1"/></svg>
<svg style="position:absolute;left:79px;top:809px" width="16" height="16" viewBox="0 0 16 16"><path d="M9 13.5 H2.5 a1 1 0 0 1 -1 -1 V3.5 a1 1 0 0 1 1 -1 H5.5 a1 1 0 0 1 0.7 0.3 L7.6 4.5 H13.5 a1 1 0 0 1 1 1 V8" fill="none" stroke="#ced0d6" stroke-width="1"/><rect x="9.6" y="9.6" width="6" height="6" rx="1.4" fill="#25324d" stroke="#548af7" stroke-width="1.1"/></svg>
<div class="tl" style="left:98.5px;top:807px;color:#bbbbbb;font-weight:bold;letter-spacing:0.33px">yudao-module-system</div>
<svg style="position:absolute;left:58.5px;top:829px" width="16" height="16" viewBox="0 0 16 16"><path d="M6 4.5 L9.5 8 L6 11.5" fill="none" stroke="#ced0d6" stroke-width="1.1"/></svg>
<svg style="position:absolute;left:79px;top:829px" width="16" height="16" viewBox="0 0 16 16"><path d="M9 13.5 H2.5 a1 1 0 0 1 -1 -1 V3.5 a1 1 0 0 1 1 -1 H5.5 a1 1 0 0 1 0.7 0.3 L7.6 4.5 H13.5 a1 1 0 0 1 1 1 V8" fill="none" stroke="#ced0d6" stroke-width="1"/><rect x="9.6" y="9.6" width="6" height="6" rx="1.4" fill="#25324d" stroke="#548af7" stroke-width="1.1"/></svg>
<div class="tl" style="left:98.5px;top:827px;color:#bbbbbb;font-weight:bold;letter-spacing:0.33px">yudao-server</div>
<svg style="position:absolute;left:58.5px;top:849px" width="16" height="16" viewBox="0 0 16 16"><path d="M6 4.5 L9.5 8 L6 11.5" fill="none" stroke="#ced0d6" stroke-width="1.1"/></svg>
<svg style="position:absolute;left:79px;top:849px" width="16" height="16" viewBox="0 0 16 16"><path d="M1.5 4 V12.5 a1 1 0 0 0 1 1 H13.5 a1 1 0 0 0 1 -1 V5.5 a1 1 0 0 0 -1 -1 H7.6 L6.2 2.8 a1 1 0 0 0 -0.7 -0.3 H2.5 a1 1 0 0 0 -1 1 Z" fill="none" stroke="#ced0d6" stroke-width="1"/></svg>
<div class="tl" style="left:98.5px;top:847px;color:#bbbbbb;font-weight:normal;letter-spacing:0.36px;-webkit-text-stroke:0.2px currentColor">yudao-ui</div>
<svg style="position:absolute;left:79px;top:869px" width="16" height="16" viewBox="0 0 16 16"><circle cx="8" cy="8" r="6" fill="none" stroke="#ced0d6" stroke-width="1.1"/><path d="M4 12 L12 4" stroke="#ced0d6" stroke-width="1.1"/></svg>
<div class="tl" style="left:98.5px;top:867px;color:#bbbbbb;font-weight:normal;letter-spacing:0.36px;-webkit-text-stroke:0.2px currentColor">.gitignore</div>
<svg style="position:absolute;left:79px;top:889px" width="16" height="16" viewBox="0 0 16 16"><path d="M2.5 4.5 H13.5 M2.5 7.5 H11 M2.5 10.5 H13.5 M2.5 13.5 H9" stroke="#ced0d6" stroke-width="1"/></svg>
<div class="tl" style="left:98.5px;top:887px;color:#bbbbbb;font-weight:normal;letter-spacing:0.36px;-webkit-text-stroke:0.2px currentColor">LICENSE</div>
<div class="abs" style="left:478px;top:25px;width:973px;height:42px;background:#3c3f41"></div>
<div class="abs" style="left:478px;top:25px;width:222px;height:42px;background:#4e5254"></div>
<div class="abs" style="left:478px;top:64px;width:222px;height:3px;border-radius:0 1.5px 1.5px 0;background:#7a8591"></div>
<svg style="position:absolute;left:490px;top:38px" width="16" height="16" viewBox="0 0 16 16"><circle cx="8" cy="8" r="6.4" fill="#25324d" stroke="#548af7" stroke-width="1.1"/><path d="M10.2 6.1 A2.7 2.7 0 1 0 10.2 9.9" fill="none" stroke="#548af7" stroke-width="1.2"/></svg>
<div class="abs" style="left:511px;top:36px;height:20px;line-height:20px;font-size:13px;color:#6897bb;letter-spacing:0.33px;white-space:pre">BpmTaskServiceImpl.java</div>
<svg style="position:absolute;left:676px;top:38px" width="16" height="16" viewBox="0 0 16 16"><path d="M4.5 4.5 L11.5 11.5 M11.5 4.5 L4.5 11.5" stroke="#7a7e82" stroke-width="1"/></svg>
<div class="abs" style="left:478px;top:67px;width:973px;height:301px;overflow:hidden">
<div class="abs" style="left:-478px;top:-67px;width:1451px;height:904px">
<div class="abs" style="left:478px;top:268px;width:973px;height:22px;background:#323232"></div>
<div class="guide" style="left:568px;top:67px;height:301px"></div>
<div class="guide" style="left:600px;top:136px;height:232px"></div>
<div class="guide" style="left:631px;top:312px;height:22px"></div>
<div class="ln" style="left:475.5px;top:70px;color:#606366">175</div>
<div class="cl" style="left:570.8px;top:70px;padding-top:1px">    <span class="a">@Override</span></div>
<div class="ln" style="left:475.5px;top:92px;color:#606366">176</div>
<div class="cl" style="left:570.8px;top:92px;padding-top:1px">    <span class="a">@Transactional</span>(rollbackFor = Exception.<span class="k">class</span>)</div>
<div class="ln" style="left:475.5px;top:114px;color:#606366">177</div>
<div class="cl" style="left:570.8px;top:114px;padding-top:1px">    <span class="k">public void </span><span class="m">approveTask</span>(Long userId<span class="k">,</span> <span class="a">@Valid</span> BpmTaskApproveReqVO reqVO) {</div>
<div class="ln" style="left:475.5px;top:136px;color:#606366">178</div>
<div class="cl" style="left:570.8px;top:136px;padding-top:1px">        <span class="c">// 1.1 <span class="cjk">校验任务存在</span></span></div>
<div class="ln" style="left:475.5px;top:158px;color:#606366">179</div>
<div class="cl" style="left:570.8px;top:158px;padding-top:1px">        Task task = validateTask(userId<span class="k">,</span> reqVO.getId())<span class="k">;</span></div>
<div class="ln" style="left:475.5px;top:180px;color:#606366">180</div>
<div class="cl" style="left:570.8px;top:180px;padding-top:1px">        <span class="c">// 1.2 <span class="cjk">校验流程实例存在</span></span></div>
<div class="ln" style="left:475.5px;top:202px;color:#606366">181</div>
<div class="cl" style="left:570.8px;top:202px;padding-top:1px">        ProcessInstance instance = <span class="f">processInstanceService</span>.getProcessInstance(task.getProcessInstanceId())<span class="k">;</span></div>
<div class="ln" style="left:475.5px;top:224px;color:#606366">182</div>
<div class="abs" style="left:804.8px;top:224px;width:39.0px;height:22px;background:#3a3a3a"></div>
<div class="cl" style="left:570.8px;top:224px;padding-top:1px">        <span class="k">if</span> (instance == <span class="k">null</span>) <span class="fold">{...}</span></div>
<div class="ln" style="left:475.5px;top:246px;color:#606366">185</div>
<div class="ln" style="left:475.5px;top:268px;color:#a4a3a3">186</div>
<div class="cl" style="left:570.8px;top:268px;padding-top:1px">        <span class="c">// 2. <span class="cjk">抄送用户</span></span></div>
<div class="ln" style="left:475.5px;top:290px;color:#606366">187</div>
<div class="cl" style="left:570.8px;top:290px;padding-top:1px">        <span class="k">if</span> (CollUtil.<span class="i">isNotEmpty</span>(reqVO.getCopyUserIds())) {</div>
<div class="ln" style="left:475.5px;top:312px;color:#606366">188</div>
<div class="cl" style="left:570.8px;top:312px;padding-top:1px">            <span class="f">processInstanceCopyService</span>.createProcessInstanceCopy(reqVO.getCopyUserIds()<span class="k">,</span> reqVO.getId())<span class="k">;</span></div>
<div class="ln" style="left:475.5px;top:334px;color:#606366">189</div>
<div class="cl" style="left:570.8px;top:334px;padding-top:1px">        }</div>
<div class="ln" style="left:475.5px;top:356px;color:#606366">190</div>
<svg style="position:absolute;left:520.4px;top:117.3px" width="17" height="16" viewBox="0 0 17 16"><path d="M11.2 5.2 A5 5 0 1 0 12 8.6" fill="#1f3322" stroke="#4f9b58" stroke-width="1.1"/><path d="M5.7 5.6 H8.3 M7 5.6 V10.4 M5.7 10.4 H8.3" stroke="#57a05f" stroke-width="1.1"/><path d="M13.4 9 V3.5" stroke="#d9566e" stroke-width="1.2"/><path d="M11 4.2 L13.4 0.9 L15.8 4.2 Z" fill="#d9566e"/></svg>
<svg style="position:absolute;left:538px;top:117.2px" width="16" height="16" viewBox="0 0 16 16"><circle cx="8" cy="8" r="2.5" fill="none" stroke="#ced0d6" stroke-width="1.1"/><path d="M10.6 5.5 V9.2 a1.75 1.75 0 0 0 3.5 0 V8 a6.1 6.1 0 1 0 -2.4 4.85" fill="none" stroke="#ced0d6" stroke-width="1.1"/></svg>
<svg style="position:absolute;left:554px;top:228px" width="16" height="16" viewBox="0 0 16 16"><path d="M6.5 4.5 L9.5 8 L6.5 11.5" fill="none" stroke="#7d8084" stroke-width="1.1"/></svg>
</div></div>
<div class="abs" style="left:478px;top:368px;width:973px;height:42px;background:#3c3f41"></div>
<div class="abs" style="left:478px;top:368px;width:326px;height:42px;background:#4e5254"></div>
<div class="abs" style="left:478px;top:407px;width:326px;height:3px;background:#4a88c7"></div>
<svg style="position:absolute;left:490px;top:381px" width="16" height="16" viewBox="0 0 16 16"><circle cx="8" cy="8" r="6.4" fill="#25324d" stroke="#548af7" stroke-width="1.1"/><path d="M10.2 6.1 A2.7 2.7 0 1 0 10.2 9.9" fill="none" stroke="#548af7" stroke-width="1.2"/></svg>
<div class="abs" style="left:511px;top:379px;height:20px;line-height:20px;font-size:13px;color:#bbbbbb;letter-spacing:0.33px;white-space:pre">BpmProcessInstanceCopyServiceImpl.java</div>
<svg style="position:absolute;left:780px;top:381px" width="16" height="16" viewBox="0 0 16 16"><path d="M4.5 4.5 L11.5 11.5 M11.5 4.5 L4.5 11.5" stroke="#7a7e82" stroke-width="1"/></svg>
<div class="abs" style="left:478px;top:410px;width:973px;height:494px;overflow:hidden">
<div class="abs" style="left:-478px;top:-410px;width:1451px;height:904px">
<div class="abs" style="left:478px;top:765px;width:973px;height:22px;background:#323232"></div>
<div class="guide" style="left:543px;top:410px;height:494px"></div>
<div class="guide" style="left:575px;top:479px;height:396px"></div>
<div class="guide" style="left:606px;top:677px;height:22px"></div>
<div class="guide" style="left:606px;top:787px;height:66px"></div>
<div class="ln" style="left:468.5px;top:413px;color:#606366">48</div>
<div class="ln" style="left:468.5px;top:435px;color:#606366">49</div>
<div class="cl" style="left:546.4px;top:435px;padding-top:1px">    <span class="a">@Override</span></div>
<div class="ln" style="left:468.5px;top:457px;color:#606366">50</div>
<div class="cl" style="left:546.4px;top:457px;padding-top:1px">    <span class="k">public void </span><span class="m">createProcessInstanceCopy</span>(Collection&lt;Long&gt; userIds<span class="k">,</span> String taskId) {</div>
<div class="ln" style="left:468.5px;top:479px;color:#606366">51</div>
<div class="cl" style="left:546.4px;top:479px;padding-top:1px">        <span class="c">// 1.1 <span class="cjk">校验任务存在</span></span></div>
<div class="ln" style="left:468.5px;top:501px;color:#606366">52</div>
<div class="cl" style="left:546.4px;top:501px;padding-top:1px">        Task task = <span class="f">taskService</span>.getTask(taskId)<span class="k">;</span></div>
<div class="ln" style="left:468.5px;top:523px;color:#606366">53</div>
<div class="abs" style="left:835.0px;top:523px;width:39.0px;height:22px;background:#3a3a3a"></div>
<div class="cl" style="left:546.4px;top:523px;padding-top:1px">        <span class="k">if</span> (ObjectUtil.<span class="i">isNull</span>(task)) <span class="fold">{...}</span></div>
<div class="ln" style="left:468.5px;top:545px;color:#606366">56</div>
<div class="cl" style="left:546.4px;top:545px;padding-top:1px">        <span class="c">// 1.2 <span class="cjk">校验流程实例存在</span></span></div>
<div class="ln" style="left:468.5px;top:567px;color:#606366">57</div>
<div class="cl" style="left:546.4px;top:567px;padding-top:1px">        String processInstanceId = task.getProcessInstanceId()<span class="k">;</span></div>
<div class="ln" style="left:468.5px;top:589px;color:#606366">58</div>
<div class="cl" style="left:546.4px;top:589px;padding-top:1px">        ProcessInstance processInstance = <span class="f">processInstanceService</span>.getProcessInstance(processInstanceId)<span class="k">;</span></div>
<div class="ln" style="left:468.5px;top:611px;color:#606366">59</div>
<div class="abs" style="left:835.0px;top:611px;width:39.0px;height:22px;background:#3a3a3a"></div>
<div class="cl" style="left:546.4px;top:611px;padding-top:1px">        <span class="k">if</span> (processInstance == <span class="k">null</span>) <span class="fold">{...}</span></div>
<div class="ln" style="left:468.5px;top:633px;color:#606366">62</div>
<div class="cl" style="left:546.4px;top:633px;padding-top:1px">        <span class="c">// 1.3 <span class="cjk">校验流程定义存在</span></span></div>
<div class="ln" style="left:468.5px;top:655px;color:#606366">63</div>
<div class="cl" style="left:546.4px;top:655px;padding-top:1px">        ProcessDefinition processDefinition = <span class="f">processDefinitionService</span>.getProcessDefinition(</div>
<div class="ln" style="left:468.5px;top:677px;color:#606366">64</div>
<div class="cl" style="left:546.4px;top:677px;padding-top:1px">                processInstance.getProcessDefinitionId())<span class="k">;</span></div>
<div class="ln" style="left:468.5px;top:699px;color:#606366">65</div>
<div class="abs" style="left:850.6px;top:699px;width:39.0px;height:22px;background:#3a3a3a"></div>
<div class="cl" style="left:546.4px;top:699px;padding-top:1px">        <span class="k">if</span> (processDefinition == <span class="k">null</span>) <span class="fold">{...}</span></div>
<div class="ln" style="left:468.5px;top:721px;color:#606366">68</div>
<div class="ln" style="left:468.5px;top:743px;color:#606366">69</div>
<div class="cl" style="left:546.4px;top:743px;padding-top:1px">        <span class="c">// 2. <span class="cjk">创建抄送流程</span></span></div>
<div class="ln" style="left:468.5px;top:765px;color:#a4a3a3">70</div>
<div class="abs" style="left:1100.2px;top:765px;width:46.8px;height:22px;background:#344134"></div>
<div class="cl" style="left:546.4px;top:765px;padding-top:1px">        List&lt;BpmProcessInstanceCopyDO&gt; copyList = <span class="i">convertList</span>(userIds<span class="k">,</span> <span class="hl">userId</span> -&gt; <span class="k">new</span> BpmProcessInstanceCopyDO()</div>
<div class="ln" style="left:468.5px;top:787px;color:#606366">71</div>
<div class="abs" style="left:757.0px;top:787px;width:46.8px;height:22px;background:#344134"></div>
<div class="cl" style="left:546.4px;top:787px;padding-top:1px">                .setUserId(<span class="hl">userId</span>).setStartUserId(Long.<span class="i">valueOf</span>(<span class="u">processInstance</span>.getStartUserId()))</div>
<div class="ln" style="left:468.5px;top:809px;color:#606366">72</div>
<div class="cl" style="left:546.4px;top:809px;padding-top:1px">                .setProcessInstanceId(<span class="u">processInstanceId</span>).setProcessInstanceName(<span class="u">processInstance</span>.getName())</div>
<div class="ln" style="left:468.5px;top:831px;color:#606366">73</div>
<div class="cl" style="left:546.4px;top:831px;padding-top:1px">                .setCategory(<span class="u">processDefinition</span>.getCategory()).setTaskId(<span class="u">taskId</span>).setTaskName(<span class="u">task</span>.getName()))<span class="k">;</span></div>
<div class="ln" style="left:468.5px;top:853px;color:#606366">74</div>
<div class="cl" style="left:546.4px;top:853px;padding-top:1px">        <span class="f">processInstanceCopyMapper</span>.insertBatch(copyList)<span class="k">;</span></div>
<div class="ln" style="left:468.5px;top:875px;color:#606366">75</div>
<div class="cl" style="left:546.4px;top:875px;padding-top:1px">    }</div>
<svg style="position:absolute;left:512.4px;top:460.6px" width="17" height="16" viewBox="0 0 17 16"><path d="M11.2 5.2 A5 5 0 1 0 12 8.6" fill="#1f3322" stroke="#4f9b58" stroke-width="1.1"/><path d="M5.7 5.6 H8.3 M7 5.6 V10.4 M5.7 10.4 H8.3" stroke="#57a05f" stroke-width="1.1"/><path d="M13.4 9 V3.5" stroke="#d9566e" stroke-width="1.2"/><path d="M11 4.2 L13.4 0.9 L15.8 4.2 Z" fill="#d9566e"/></svg>
<svg style="position:absolute;left:529px;top:526px" width="16" height="16" viewBox="0 0 16 16"><path d="M6.5 4.5 L9.5 8 L6.5 11.5" fill="none" stroke="#7d8084" stroke-width="1.1"/></svg>
<svg style="position:absolute;left:529px;top:614px" width="16" height="16" viewBox="0 0 16 16"><path d="M6.5 4.5 L9.5 8 L6.5 11.5" fill="none" stroke="#7d8084" stroke-width="1.1"/></svg>
<svg style="position:absolute;left:529px;top:702px" width="16" height="16" viewBox="0 0 16 16"><path d="M6.5 4.5 L9.5 8 L6.5 11.5" fill="none" stroke="#7d8084" stroke-width="1.1"/></svg>
<svg style="position:absolute;left:552px;top:767px" width="16" height="17" viewBox="0 0 16 17"><circle cx="8" cy="6.5" r="5" fill="#f2c55c"/><rect x="6" y="10" width="4" height="2" fill="#f2c55c"/><path d="M5.8 13 H10.2 M6.3 15 H9.7" stroke="#ced0d6" stroke-width="1.1"/></svg>
<div class="abs" style="left:1099px;top:767px;width:2px;height:18px;background:#bbbbbb"></div>
</div></div>
<svg class="abs" style="left:0;top:0" width="1451" height="904" viewBox="0 0 1451 904">
<rect x="599.6" y="739.6" width="826.3" height="142.2" fill="none" stroke="#f5407c" stroke-width="3.3"/>
<path d="M935 332 C936 342 936.5 350 935 354 C930 364 920 370 905 375 C885 382 865 390 845 400 C820 412 800 428 790 440 C785 447 782 452 781.5 455" fill="none" stroke="#f23e7c" stroke-width="3.4" stroke-linecap="round"/>
<path d="M772.5 430 C776 440 779 448 781.5 455 C790 453 800 451 808 450" fill="none" stroke="#f23e7c" stroke-width="3.6" stroke-linecap="round" stroke-linejoin="round"/>
</svg>
</body></html>
